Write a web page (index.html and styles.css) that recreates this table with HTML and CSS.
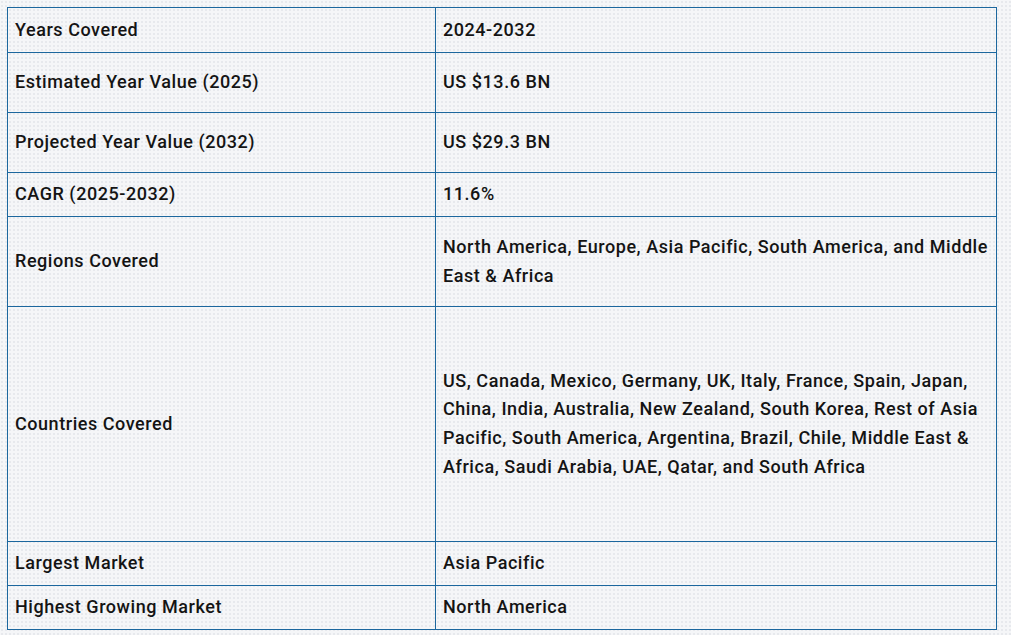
FILE: index.html
```html
<!DOCTYPE html>
<html lang="en">
<head>
<meta charset="utf-8">
<title>Report Scope</title>
<link rel="stylesheet" href="styles.css">
</head>
<body>
<table class="scope">
  <colgroup><col class="c1"><col class="c2"></colgroup>
  <tbody>
    <tr class="h45"><td>Years Covered</td><td>2024-2032</td></tr>
    <tr class="h60"><td>Estimated Year Value (2025)</td><td>US $13.6 BN</td></tr>
    <tr class="h60"><td>Projected Year Value (2032)</td><td>US $29.3 BN</td></tr>
    <tr class="h44"><td>CAGR (2025-2032)</td><td>11.6%</td></tr>
    <tr class="h90"><td>Regions Covered</td><td>North America, Europe, Asia Pacific, South America, and Middle East &amp; Africa</td></tr>
    <tr class="h235"><td>Countries Covered</td><td>US, Canada, Mexico, Germany, UK, Italy, France, Spain, Japan, China, India, Australia, New Zealand, South Korea, Rest of Asia Pacific, South America, Argentina, Brazil, Chile, Middle East &amp; Africa, Saudi Arabia, UAE, Qatar, and South Africa</td></tr>
    <tr class="h44"><td>Largest Market</td><td>Asia Pacific</td></tr>
    <tr class="h44"><td>Highest Growing Market</td><td>North America</td></tr>
  </tbody>
</table>
</body>
</html>
```
FILE: styles.css
```css
html, body {
  margin: 0;
  padding: 0;
}
body {
  padding: 7px 0 0 7px;
  background-color: #f5f6f8;
  background-image: radial-gradient(circle, #e7e9ed 0.8px, transparent 1px);
  background-size: 4px 4px;
  font-family: Roboto, "Liberation Sans", sans-serif;
  font-size: 18px;
  font-weight: 500;
  letter-spacing: 0.55px;
  line-height: 28.6px;
  color: #141414;
  min-height: 635px;
  box-sizing: border-box;
}
.scope {
  border-collapse: collapse;
  table-layout: fixed;
  width: 989px;
}
.c1 { width: 428px; }
.c2 { width: 561px; }
.scope td {
  border: 1px solid #1c679e;
  padding: 0 7px;
  vertical-align: middle;
  text-align: left;
}
.h44 { height: 44px; }
.h45 { height: 45px; }
.h60 { height: 60px; }
.h90 { height: 90px; }
.h235 { height: 235px; }
```
